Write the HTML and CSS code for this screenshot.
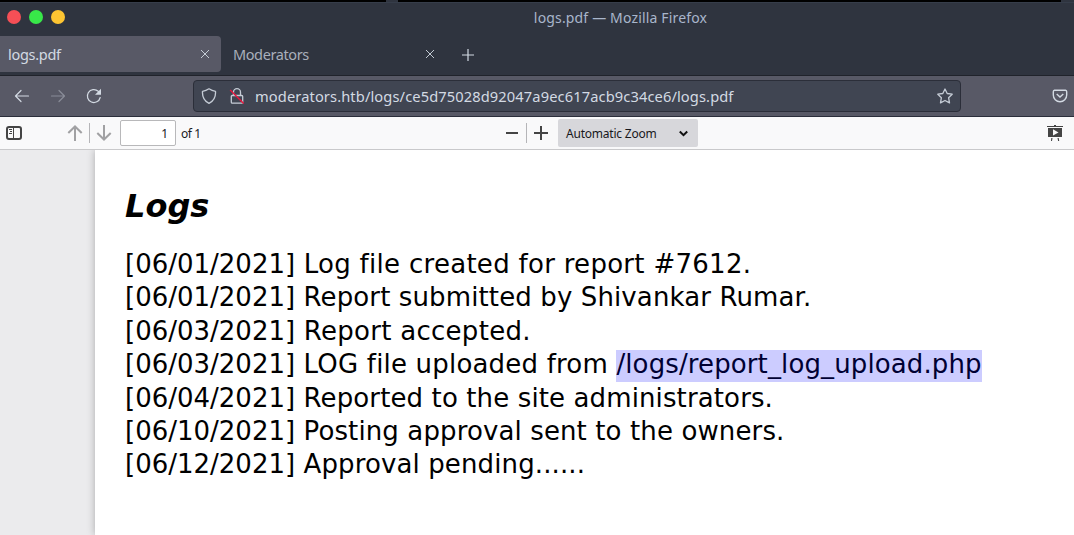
FILE: index.html
```html
<!DOCTYPE html>
<html lang="en">
<head>
<meta charset="utf-8">
<title>logs.pdf — Mozilla Firefox</title>
<link rel="stylesheet" href="styles.css">
</head>
<body>
<div class="window">
  <div class="strip"><span class="strip-a"></span><span class="strip-b"></span></div>
  <header class="titlebar">
    <div class="lights"><i class="light red"></i><i class="light green"></i><i class="light yellow"></i></div>
    <span class="title">logs.pdf — Mozilla Firefox</span>
  </header>
  <nav class="tabs">
    <div class="tab active"><span class="tab-name">logs.pdf</span><svg class="close" viewBox="0 0 10 10"><path d="M1 1l8 8M9 1l-8 8"/></svg></div>
    <div class="tab"><span class="tab-name">Moderators</span><svg class="close" viewBox="0 0 10 10"><path d="M1 1l8 8M9 1l-8 8"/></svg></div>
    <svg class="new-tab" viewBox="0 0 12 12"><path d="M6 0v12M0 6h12"/></svg>
  </nav>
  <div class="navbar">
    <svg class="nav-icon" viewBox="0 0 16 16"><path d="M14.500 8H1.500M7 2.500L1.500 8 7 13.500"/></svg>
    <svg class="nav-icon dim" viewBox="0 0 16 16"><path d="M1.500 8h13M9 2.500L14.500 8 9 13.500"/></svg>
    <svg class="nav-icon" viewBox="0 0 16 16"><path d="M14.200 9.500a6.500 6.500 0 1 1-2-6.300l1.500 1.500"/><path class="solid" d="M15 .8v6H9z"/></svg>
    <div class="urlbar">
      <svg class="url-icon" viewBox="0 0 16 16"><path d="M8 .8c2 1.400 4 2.200 6.500 2.500.4 5.500-1.500 9.500-6.500 12C3 12.800 1.100 8.800 1.500 3.300 4 3 6 2.200 8 .8z"/></svg>
      <svg class="url-icon lock" viewBox="0 0 16 16"><path d="M4.500 7V4.200a3.500 3.500 0 0 1 7 0V7M3.500 7.500h9.200a1 1 0 0 1 1 1v5.700a1 1 0 0 1-1 1H3.300a1 1 0 0 1-1-1V8.500a1 1 0 0 1 1-1z"/><path class="slash" d="M1.200 2l13.500 13.500"/></svg>
      <span class="url">moderators.htb/logs/ce5d75028d92047a9ec617acb9c34ce6/logs.pdf</span>
      <svg class="url-icon star" viewBox="0 0 16 16"><path d="M8 1l2.200 4.500 5 .7-3.600 3.500.9 5.200L8 12.500l-4.500 2.400.9-5.200L.8 6.200l5-.7z"/></svg>
    </div>
    <svg class="pocket" viewBox="0 0 16 14"><path d="M2.500 1.200h11a1.500 1.500 0 0 1 1.200 1.500V6a6.700 6.700 0 0 1-13.400 0V2.700a1.500 1.500 0 0 1 1.200-1.500zM4.700 5L8 8l3.300-3"/></svg>
  </div>
  <div class="pdfbar">
    <svg class="sidebar" viewBox="0 0 16 14"><rect x="1" y="1" width="14" height="12" rx="2"/><path class="thin" d="M7.500 1v12M3 3.500h3M4 5.500h2M3 7.500h3"/></svg>
    <svg class="arrow up" viewBox="0 0 16 16"><path d="M8 16V1.500M1.300 8L8 1.500 14.700 8"/></svg>
    <span class="rule"></span>
    <svg class="arrow down" viewBox="0 0 16 16"><path d="M8 0v14.500M1.300 8L8 14.500 14.700 8"/></svg>
    <div class="page-field">1</div>
    <span class="page-count">of 1</span>
    <svg class="sign minus" viewBox="0 0 14 14"><path d="M1 7h12"/></svg>
    <span class="rule"></span>
    <svg class="sign plus" viewBox="0 0 14 14"><path d="M0 7h14M7 0v14"/></svg>
    <div class="select"><span>Automatic Zoom</span><svg class="chevron" viewBox="0 0 8 6"><path d="M.7 1.200L4 4.500l3.300-3.300"/></svg></div>
    <svg class="present" viewBox="0 0 16 16"><path d="M7 0h2v1h7v1H0V1h7zM1 3h14v8.500a.5.5 0 0 1-.5.5h-13a.5.5 0 0 1-.5-.5zM4.300 13h1.200L5 16H4zM10.500 13h1.200l.5 3h-1.100z"/><path class="play" d="M6 4.200v6.400l5.500-3.200z"/></svg>
  </div>
  <main class="viewer">
    <article class="page">
      <h1 class="heading">Logs</h1>
      <div class="log">
        <p class="line wide"><span class="date">[06/01/2021]</span> Log file created for report #7612.</p>
        <p class="line"><span class="date">[06/01/2021]</span> Report submitted by Shivankar Rumar.</p>
        <p class="line wide"><span class="date">[06/03/2021]</span> Report accepted.</p>
        <p class="line mid"><span class="date">[06/03/2021]</span> LOG file uploaded from <span class="selected">/logs/report_log_upload.php</span></p>
        <p class="line"><span class="date">[06/04/2021]</span> Reported to the site administrators.</p>
        <p class="line"><span class="date">[06/10/2021]</span> Posting approval sent to the owners.</p>
        <p class="line"><span class="date">[06/12/2021]</span> Approval pending......</p>
      </div>
    </article>
  </main>
</div>
</body>
</html>
```
FILE: styles.css
```css
* { box-sizing: border-box; }
body { margin: 0; font-family: "Noto Sans", sans-serif; }
svg { display: block; flex: none; fill: none; stroke: #d3dae3; }
.window { width: 1074px; height: 535px; overflow: hidden; display: flex; flex-direction: column; background: #2f343f; }
.strip { height: 2px; flex: none; display: flex; gap: 12px; }
.strip-a { width: 386px; background: #000; }
.strip-b { width: 663px; background: #000; }
.titlebar { height: 34px; flex: none; display: grid; grid-template-columns: 167px 1fr; border-top: 1px solid #363d4a; }
.lights { display: flex; gap: 8px; padding: 7px 0 0 7px; }
.light { width: 14px; height: 14px; border-radius: 50%; }
.red { background: #f54f56; }
.green { background: #38e849; }
.yellow { background: #fdc532; }
.title { color: #a9b6cb; font-size: 14px; letter-spacing: .16px; line-height: 20px; padding-top: 5px; text-align: center; }
.tabs { height: 40px; flex: none; display: flex; border-bottom: 1px solid #20232b; }
.tab { display: flex; justify-content: space-between; width: 221px; height: 36px; padding: 0 11px 0 8px; align-items: center; color: #a9afbb; font-size: 14.5px; letter-spacing: -.4px; border-radius: 4px; }
.tab + .tab { margin-left: 4px; }
.active { background: #585966; color: #d3dae3; border-radius: 0 4px 4px 0; letter-spacing: -.3px; }
.close { width: 10px; height: 10px; stroke-width: .9; }
.new-tab { width: 12px; height: 12px; margin: 13px 0 0 16px; stroke-width: 1.2; }
.navbar { height: 41px; flex: none; display: flex; align-items: center; background: #585966; border-bottom: 1px solid #2b2e3b; padding-left: 14px; }
.nav-icon { width: 16px; height: 16px; margin-right: 20px; stroke-width: 1.2; stroke-linecap: round; stroke-linejoin: round; }
.dim { opacity: .4; }
.solid { fill: #d3dae3; stroke: none; }
.urlbar { width: 768px; height: 32px; margin-left: 71px; display: flex; align-items: center; background: #404552; border: 1px solid #2b2e39; border-radius: 4px; padding: 0 7px; }
.url-icon { width: 16px; height: 16px; stroke-width: 1.3; stroke: #c5ccd6; stroke-linejoin: round; }
.lock { margin-left: 12px; }
.slash { stroke: #e8153c; stroke-width: 1.4; }
.url { color: #d3dae3; font-size: 14.667px; letter-spacing: .11px; margin-left: 10px; line-height: 20px; white-space: nowrap; }
.star { margin-left: auto; }
.pocket { width: 16px; height: 14px; margin-left: 91px; stroke-width: 1.4; }
.pdfbar { height: 33px; flex: none; display: flex; align-items: center; background: #f9f9fa; border-bottom: 1px solid #c9c9cb; color: #18181c; font-size: 12px; letter-spacing: -.22px; }
.sidebar { width: 16px; height: 14px; margin-left: 6px; stroke: #444; stroke-width: 2; }
.sidebar .thin { stroke-width: 1; }
.arrow { width: 16px; height: 16px; stroke: #a1a1a3; stroke-width: 2; }
.up { margin: 0 6px 0 45px; }
.down { margin: 0 8px 0 6px; }
.rule { width: 1px; height: 20px; background: #b5b5b8; }
.page-field { width: 56px; height: 26px; border: 1px solid #b8b8ba; border-radius: 2px; background: #fff; text-align: right; padding-right: 7px; line-height: 25px; }
.page-count { width: 20px; margin-left: 5px; letter-spacing: -.4px; white-space: nowrap; }
.sign { width: 14px; height: 14px; stroke: #444; stroke-width: 2; }
.minus { margin: 0 7px 0 304px; }
.plus { margin: 0 10px 0 7px; }
.select { width: 140px; height: 28px; display: flex; align-items: center; justify-content: space-between; padding: 0 10px 0 8px; background: #d7d7db; border-radius: 2px; }
.chevron { width: 9px; height: 7px; stroke: #111; stroke-width: 1.8; }
.present { width: 16px; height: 16px; margin: 0 11px 0 auto; fill: #444; stroke: none; }
.play { fill: #f9f9fa; }
.viewer { flex: 1; background: #ebebed; display: flex; padding-left: 95px; }
.page { flex: 1; background: #fff; color: #000; padding: 35px 0 0 30px; box-shadow: 0 0 8px rgba(0,0,0,.28); clip-path: inset(0 0 0 -12px); font-family: "DejaVu Sans", sans-serif; }
.heading { margin: 0; font-size: 32px; line-height: 42px; font-weight: bold; font-style: italic; }
.log { padding-top: 21px; }
.line { margin: 0; font-size: 26px; letter-spacing: .12px; font-variant-ligatures: none; line-height: 33.4px; white-space: nowrap; }
.wide { letter-spacing: .29px; }
.mid { letter-spacing: .19px; }
.date { letter-spacing: 0; }
.selected { display: inline-block; height: 32px; line-height: 29px; vertical-align: top; margin: 2px 0 -1px; letter-spacing: .12px; background: #ccccff; color: #000033; }
```
